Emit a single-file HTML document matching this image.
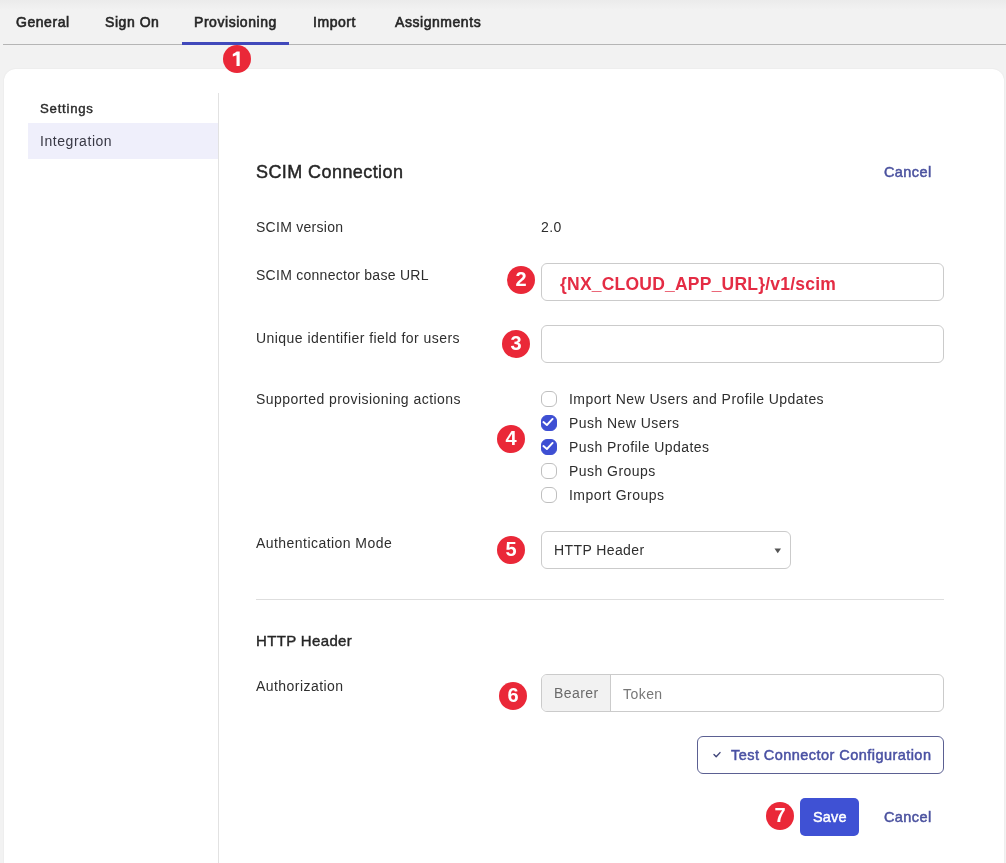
<!DOCTYPE html>
<html><head><meta charset="utf-8">
<style>
*{box-sizing:border-box;margin:0;padding:0}
html,body{width:1006px;height:863px;overflow:hidden;background:#f2f2f2;font-family:"Liberation Sans",sans-serif;color:#2a2a2a}
body{position:relative}
.abs{position:absolute;white-space:nowrap}
.topgrad{position:absolute;left:0;top:0;width:1006px;height:10px;background:linear-gradient(#ebebeb,#f2f2f2)}
.tab{position:absolute;top:13px;font-size:14px;letter-spacing:0.55px;-webkit-text-stroke:0.6px #262626;color:#262626;line-height:18px;white-space:nowrap}
.tabline{position:absolute;left:3px;top:44px;width:1003px;height:1px;background:#b5b5b5}
.tabsel{position:absolute;left:182px;top:42px;width:107px;height:3px;background:#4149bb}
.card{position:absolute;left:4px;top:69px;width:1000px;height:830px;background:#fff;border-radius:12px;box-shadow:0 0 2px rgba(0,0,0,0.07)}
.lbl{position:absolute;left:256px;font-size:14px;letter-spacing:0.45px;color:#2e2e2e;line-height:18px;white-space:nowrap}
.badge{position:absolute;width:28px;height:28px;border-radius:50%;background:#ea2838;color:#fff;font-weight:bold;font-size:20px;line-height:27px;text-align:center}
.input{position:absolute;left:541px;width:403px;height:38px;border:1px solid #cbcbcb;border-radius:6px;background:#fff}
.cb{position:absolute;left:541px;width:16px;height:16px;border:1.8px solid #bfbfbf;border-radius:6px;background:#fff}
.cb.on{background:#3e4fd3;border-color:#3e4fd3}
.cb svg{position:absolute;left:-1.8px;top:-1.8px}
.cbl{position:absolute;left:569px;font-size:14px;letter-spacing:0.45px;color:#2e2e2e;line-height:18px;white-space:nowrap}
.link{position:absolute;font-size:14.5px;letter-spacing:0.4px;-webkit-text-stroke:0.5px #4b529f;color:#4b529f;line-height:18px;white-space:nowrap}
</style></head><body><div id="wrap" style="position:absolute;left:0;top:0;width:1006px;height:863px;will-change:transform">
<div class="topgrad"></div>
<div class="tab" style="left:16px">General</div>
<div class="tab" style="left:105px">Sign On</div>
<div class="tab" style="left:194px">Provisioning</div>
<div class="tab" style="left:313px">Import</div>
<div class="tab" style="left:395px">Assignments</div>
<div class="tabline"></div>
<div class="tabsel"></div>

<div class="card"></div>
<div class="badge" style="left:223px;top:45px"><svg style="position:absolute;left:0;top:0" width="28" height="28" viewBox="0 0 28 28"><path d="M16.7 6.6 L16.7 20.9 L13.5 20.9 L13.5 10.3 L9.8 11.4 L9.8 8.9 Q12.3 8.1 13.7 6.6 Z" fill="#fff"/></svg></div>

<!-- sidebar -->
<div class="abs" style="left:40px;top:99.5px;font-size:13.2px;letter-spacing:0.75px;-webkit-text-stroke:0.4px #2a2a2a;color:#2a2a2a;line-height:18px">Settings</div>
<div class="abs" style="left:28px;top:123px;width:190px;height:36px;background:#efeffb"></div>
<div class="abs" style="left:40px;top:132px;font-size:14px;letter-spacing:0.55px;color:#383844;line-height:18px">Integration</div>
<div class="abs" style="left:218px;top:93px;width:1px;height:770px;background:#e2e2e2"></div>

<div class="abs" style="left:256px;top:161px;font-size:18px;letter-spacing:0.42px;-webkit-text-stroke:0.45px #262626;color:#262626;line-height:22px">SCIM Connection</div>
<div class="link" style="left:884px;top:163px">Cancel</div>

<div class="lbl" style="top:218px;letter-spacing:0.27px">SCIM version</div>
<div class="abs" style="left:541px;top:218px;font-size:14px;letter-spacing:0.45px;color:#2e2e2e;line-height:18px">2.0</div>

<div class="lbl" style="top:266px;letter-spacing:0.27px">SCIM connector base URL</div>
<div class="badge" style="left:507px;top:266px">2</div>
<div class="input" style="top:263px"></div>
<div class="abs" style="left:560px;top:274px;font-size:17.5px;letter-spacing:0.22px;font-weight:bold;color:#e42c44;line-height:20px">{NX_CLOUD_APP_URL}/v1/scim</div>

<div class="lbl" style="top:329px">Unique identifier field for users</div>
<div class="badge" style="left:502px;top:330px">3</div>
<div class="input" style="top:325px"></div>

<div class="lbl" style="top:390px">Supported provisioning actions</div>
<div class="badge" style="left:497px;top:425px">4</div>
<div class="cb" style="top:391px"></div><div class="cbl" style="top:390px">Import New Users and Profile Updates</div>
<div class="cb on" style="top:415px"><svg width="16" height="16" viewBox="0 0 16 16"><path d="M3.4 8 L6.9 11 L12.6 4.9" fill="none" stroke="#fff" stroke-width="1.9" stroke-linecap="round" stroke-linejoin="round"/></svg></div><div class="cbl" style="top:414px">Push New Users</div>
<div class="cb on" style="top:439px"><svg width="16" height="16" viewBox="0 0 16 16"><path d="M3.4 8 L6.9 11 L12.6 4.9" fill="none" stroke="#fff" stroke-width="1.9" stroke-linecap="round" stroke-linejoin="round"/></svg></div><div class="cbl" style="top:438px">Push Profile Updates</div>
<div class="cb" style="top:463px"></div><div class="cbl" style="top:462px">Push Groups</div>
<div class="cb" style="top:487px"></div><div class="cbl" style="top:486px">Import Groups</div>

<div class="lbl" style="top:534px">Authentication Mode</div>
<div class="badge" style="left:497px;top:536px">5</div>
<div class="input" style="top:531px;width:250px"></div>
<div class="abs" style="left:554px;top:541px;font-size:14px;letter-spacing:0.4px;color:#2e2e2e;line-height:18px">HTTP Header</div>
<svg class="abs" style="left:774px;top:548px" width="8" height="6" viewBox="0 0 8 6"><path d="M0.5 0.5 L7 0.5 L3.75 5.2 Z" fill="#555"/></svg>

<div class="abs" style="left:256px;top:599px;width:688px;height:1px;background:#dedede"></div>
<div class="abs" style="left:256px;top:630.7px;font-size:15px;letter-spacing:0.35px;-webkit-text-stroke:0.4px #262626;color:#262626;line-height:20px">HTTP Header</div>
<div class="lbl" style="top:677px">Authorization</div>
<div class="badge" style="left:499px;top:682px">6</div>
<div class="input" style="top:674px;height:38px;overflow:hidden">
  <div class="abs" style="left:0;top:0;width:69px;height:36px;background:#f2f2f2;border-right:1px solid #cbcbcb"></div>
</div>
<div class="abs" style="left:554px;top:684px;font-size:14px;letter-spacing:0.45px;color:#6a6a6a;line-height:18px">Bearer</div>
<div class="abs" style="left:623px;top:685px;font-size:14px;letter-spacing:0.45px;color:#777;line-height:18px">Token</div>

<div class="abs" style="left:697px;top:736px;width:247px;height:38px;border:1px solid #5b6092;border-radius:6px"></div>
<svg class="abs" style="left:713px;top:751px" width="9" height="8" viewBox="0 0 9 8"><path d="M1 3.6 L3.2 5.8 L7 1.6" fill="none" stroke="#40457a" stroke-width="1.4" stroke-linecap="round" stroke-linejoin="round"/></svg>
<div class="link" style="left:731px;top:746px;letter-spacing:0.45px;color:#4a51a3;-webkit-text-stroke:0.5px #4a51a3">Test Connector Configuration</div>

<div class="badge" style="left:766px;top:802px">7</div>
<div class="abs" style="left:800px;top:798px;width:59px;height:38px;background:#3f51d4;border-radius:5px"></div>
<div class="abs" style="left:813px;top:808px;font-size:14.5px;letter-spacing:0.15px;-webkit-text-stroke:0.45px #fff;color:#fff;line-height:18px">Save</div>
<div class="link" style="left:884px;top:808px">Cancel</div>
</div></body></html>
